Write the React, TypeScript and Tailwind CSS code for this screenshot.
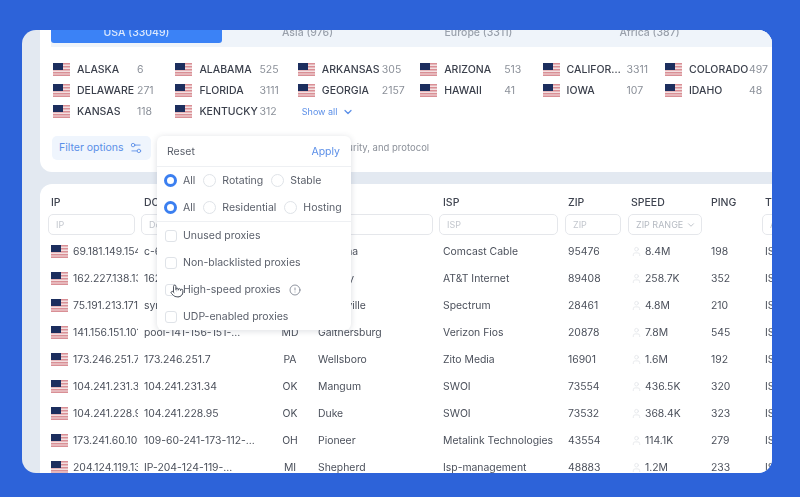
import { ChevronDown, CircleAlert, Pointer, Settings2, User } from 'lucide-react';

const tabs = ['USA (33049)', 'Asia (976)', 'Europe (3311)', 'Africa (387)'];

const locations = [
  ['ALASKA', '6'],
  ['ALABAMA', '525'],
  ['ARKANSAS', '305'],
  ['ARIZONA', '513'],
  ['CALIFORNIA', '3311'],
  ['COLORADO', '497'],
  ['DELAWARE', '271'],
  ['FLORIDA', '3111'],
  ['GEORGIA', '2157'],
  ['HAWAII', '41'],
  ['IOWA', '107'],
  ['IDAHO', '48'],
  ['KANSAS', '118'],
  ['KENTUCKY', '312'],
];

const rows = [
  ['69.181.149.154', 'c-69-181-149-154...', 'CA', 'Sonoma', 'Comcast Cable', '95476', '8.4M', '198'],
  ['162.227.138.134', '162.227.138.134', 'NV', 'Fernley', 'AT&T Internet', '89408', '258.7K', '352'],
  ['75.191.213.171', 'syn-075-191-213...', 'NC', 'Southville', 'Spectrum', '28461', '4.8M', '210'],
  ['141.156.151.101', 'pool-141-156-151-...', 'MD', 'Gaithersburg', 'Verizon Fios', '20878', '7.8M', '545'],
  ['173.246.251.7', '173.246.251.7', 'PA', 'Wellsboro', 'Zito Media', '16901', '1.6M', '192'],
  ['104.241.231.34', '104.241.231.34', 'OK', 'Mangum', 'SWOI', '73554', '436.5K', '320'],
  ['104.241.228.95', '104.241.228.95', 'OK', 'Duke', 'SWOI', '73532', '368.4K', '323'],
  ['173.241.60.109', '109-60-241-173-112-...', 'OH', 'Pioneer', 'Metalink Technologies', '43554', '114.1K', '279'],
  ['204.124.119.137', 'IP-204-124-119-...', 'MI', 'Shepherd', 'Isp-management', '48883', '1.2M', '233'],
];

const Flag = () => (
  <svg width="17" height="13" viewBox="0 0 17 13" className="shrink-0">
    <rect width="17" height="13" fill="#f3dfe0" />
    <rect y="0" width="17" height="1.5" fill="#d98f95" />
    <rect y="3" width="17" height="1.5" fill="#d98f95" />
    <rect y="6" width="17" height="1.5" fill="#d98f95" />
    <rect y="9" width="17" height="1.5" fill="#d98f95" />
    <rect y="11.5" width="17" height="1.5" fill="#d98f95" />
    <rect width="10" height="7" fill="#1c2e5e" />
  </svg>
);

const Radio = ({ label, checked }: { label: string; checked?: boolean }) => (
  <div className="flex items-center gap-[6px]">
    {checked ? (
      <span className="h-[13px] w-[13px] rounded-full border-[3.5px] border-[#3b7ff0] bg-white" />
    ) : (
      <span className="h-[13px] w-[13px] rounded-full border border-[#dfe3e8] bg-white" />
    )}
    <span>{label}</span>
  </div>
);

const Check = ({ label, icon }: { label: string; icon?: boolean }) => (
  <div className="flex h-[27px] items-center gap-[6px]">
    <span className="h-[12px] w-[12px] rounded-[3px] border border-[#dfe3e8] bg-white" />
    <span>{label}</span>
    {icon && <CircleAlert className="ml-[2px] h-[12px] w-[12px] text-[#6b7280]" strokeWidth={1.5} />}
  </div>
);

const TextFilter = ({ placeholder, className }: { placeholder: string; className: string }) => (
  <input
    placeholder={placeholder}
    readOnly
    className={`h-[21px] rounded-[5px] border border-[#e5e7eb] bg-white pl-[7px] text-[9px] outline-none placeholder:text-[#c3c7ce] ${className}`}
  />
);

export default function App() {
  return (
    <div className="h-[497px] w-[800px] overflow-hidden bg-[#2d63d9] pl-[22px] pt-[30px] font-['Inter',sans-serif]">
      <div className="relative h-[443px] w-[750px] overflow-hidden rounded-[14px] bg-[#e3e9f1] pl-[18px] blur-[0.5px]">
        {/* locations */}
        <div className="h-[142px] rounded-bl-[12px] bg-white">
          <div className="ml-[11px] flex h-[17px] bg-[#eff4fa]">
            {tabs.map((tab, i) => (
              <div
                key={tab}
                className={`flex h-[13px] w-[171px] justify-center overflow-hidden rounded-b-[3px] text-[10.5px] font-medium ${
                  i === 0 ? 'bg-[#3b82f6] text-[#dbe8fd]' : 'text-[#9aa1ac]'
                }`}
              >
                <span className="-mt-[5px] leading-4">{tab}</span>
              </div>
            ))}
          </div>
          <div className="grid grid-cols-[repeat(6,122.4px)] pl-[13px] pt-[12px]">
            {locations.map(([name, count]) => (
              <div key={name} className="flex h-[21px] items-center text-[10.5px]">
                <Flag />
                <span className="ml-[7px] w-[60px] truncate font-medium text-[#3a3f4b]">{name}</span>
                <span className="text-[#8b9099]">{count}</span>
              </div>
            ))}
            <div className="flex h-[21px] items-center gap-[5px] pl-[4px] text-[9px] text-[#5b8fe8]">
              Show all
              <ChevronDown className="h-[12px] w-[12px]" strokeWidth={2.5} />
            </div>
          </div>
          <div className="ml-[12px] mt-[14px] flex items-center">
            <div className="flex h-[24px] w-[99px] items-center gap-[5px] rounded-[5px] bg-[#eff5fd] pl-[7px] text-[10.5px] text-[#5b8fe8]">
              Filter options
              <Settings2 className="h-[14px] w-[14px]" strokeWidth={1.5} />
            </div>
            <span className="ml-[11px] whitespace-nowrap text-[9.5px] text-[#8b9099]">
              Filter location, ISP, speed, ping, type, security, and protocol
            </span>
          </div>
        </div>

        {/* proxy table */}
        <div className="mt-[12px] h-[300px] overflow-hidden rounded-tl-[12px] bg-white pl-[8px] pt-[12px]">
          <div className="grid grid-cols-[93px_134px_40px_124px_126px_63px_80px_54px_100px] text-[10.5px] font-medium text-[#3f4450]">
            {['IP', 'DOMAIN', '', 'CITY', 'ISP', 'ZIP', 'SPEED', 'PING', 'TYPE'].map((h, i) => (
              <div key={i} className={`h-[14px] leading-[14px] ${i === 4 ? 'pl-[4px]' : 'pl-[3px]'}`}>
                {h}
              </div>
            ))}
          </div>
          <div className="mt-[4px] grid h-[21px] grid-cols-[93px_134px_40px_124px_126px_63px_80px_54px_100px]">
            <TextFilter placeholder="IP" className="w-[87px]" />
            <TextFilter placeholder="Domain" className="w-[128px]" />
            <span />
            <TextFilter placeholder="City" className="w-[118px]" />
            <TextFilter placeholder="ISP" className="w-[119px]" />
            <TextFilter placeholder="ZIP" className="w-[56px]" />
            <div className="flex h-[21px] w-[74px] items-center gap-[3px] rounded-[5px] border border-[#e5e7eb] pl-[7px] text-[9px] text-[#b5bac2]">
              ZIP RANGE
              <ChevronDown className="h-[10px] w-[10px]" />
            </div>
            <span />
            <TextFilter placeholder="ALL" className="w-[90px]" />
          </div>
          <div className="mt-[3px]">
            {rows.map(([ip, domain, state, city, isp, zip, speed, ping]) => (
              <div
                key={ip}
                className="grid h-[27px] grid-cols-[93px_134px_40px_124px_126px_63px_80px_54px_100px] items-center text-[10.4px] text-[#4b505b]"
              >
                <div className="flex items-center gap-[5px] overflow-hidden pl-[3px] pr-[3px]">
                  <Flag />
                  <span className="overflow-hidden whitespace-nowrap">{ip}</span>
                </div>
                <span className="pl-[3px] whitespace-nowrap">{domain}</span>
                <span className="w-[30px] text-center">{state}</span>
                <span className="pl-[3px]">{city}</span>
                <span className="pl-[4px] whitespace-nowrap">{isp}</span>
                <span className="pl-[3px]">{zip}</span>
                <div className="flex items-center gap-[3px] pl-[3px]">
                  <User className="h-[11px] w-[11px] text-[#dfe2e6]" strokeWidth={1.5} />
                  {speed}
                </div>
                <span className="pl-[3px]">{ping}</span>
                <span className="pl-[3px]">ISP</span>
              </div>
            ))}
          </div>
        </div>

        {/* filter options popover */}
        <div className="absolute left-[135px] top-[106px] h-[194px] w-[194px] rounded-[6px] bg-white text-[10.5px] text-[#5b606b] shadow-[0_1px_6px_rgba(60,70,90,0.18)]">
          <div className="flex h-[31px] items-center justify-between border-b border-[#eef0f3] pl-[10px] pr-[11px] pt-[1px]">
            <span>Reset</span>
            <span className="text-[#5b8fe8]">Apply</span>
          </div>
          <div className="border-b border-[#eef0f3] pl-[7px]">
            <div className="flex h-[27px] items-center gap-[8px]">
              <Radio label="All" checked />
              <Radio label="Rotating" />
              <Radio label="Stable" />
            </div>
            <div className="flex h-[27px] items-center gap-[8px]">
              <Radio label="All" checked />
              <Radio label="Residential" />
              <Radio label="Hosting" />
            </div>
          </div>
          <div className="pl-[8px]">
            <Check label="Unused proxies" />
            <Check label="Non-blacklisted proxies" />
            <Check label="High-speed proxies" icon />
            <Check label="UDP-enabled proxies" />
          </div>
        </div>
        <Pointer className="absolute left-[148px] top-[254px] h-[14px] w-[14px] fill-white text-[#444a55]" strokeWidth={1.6} />
      </div>
    </div>
  );
}
